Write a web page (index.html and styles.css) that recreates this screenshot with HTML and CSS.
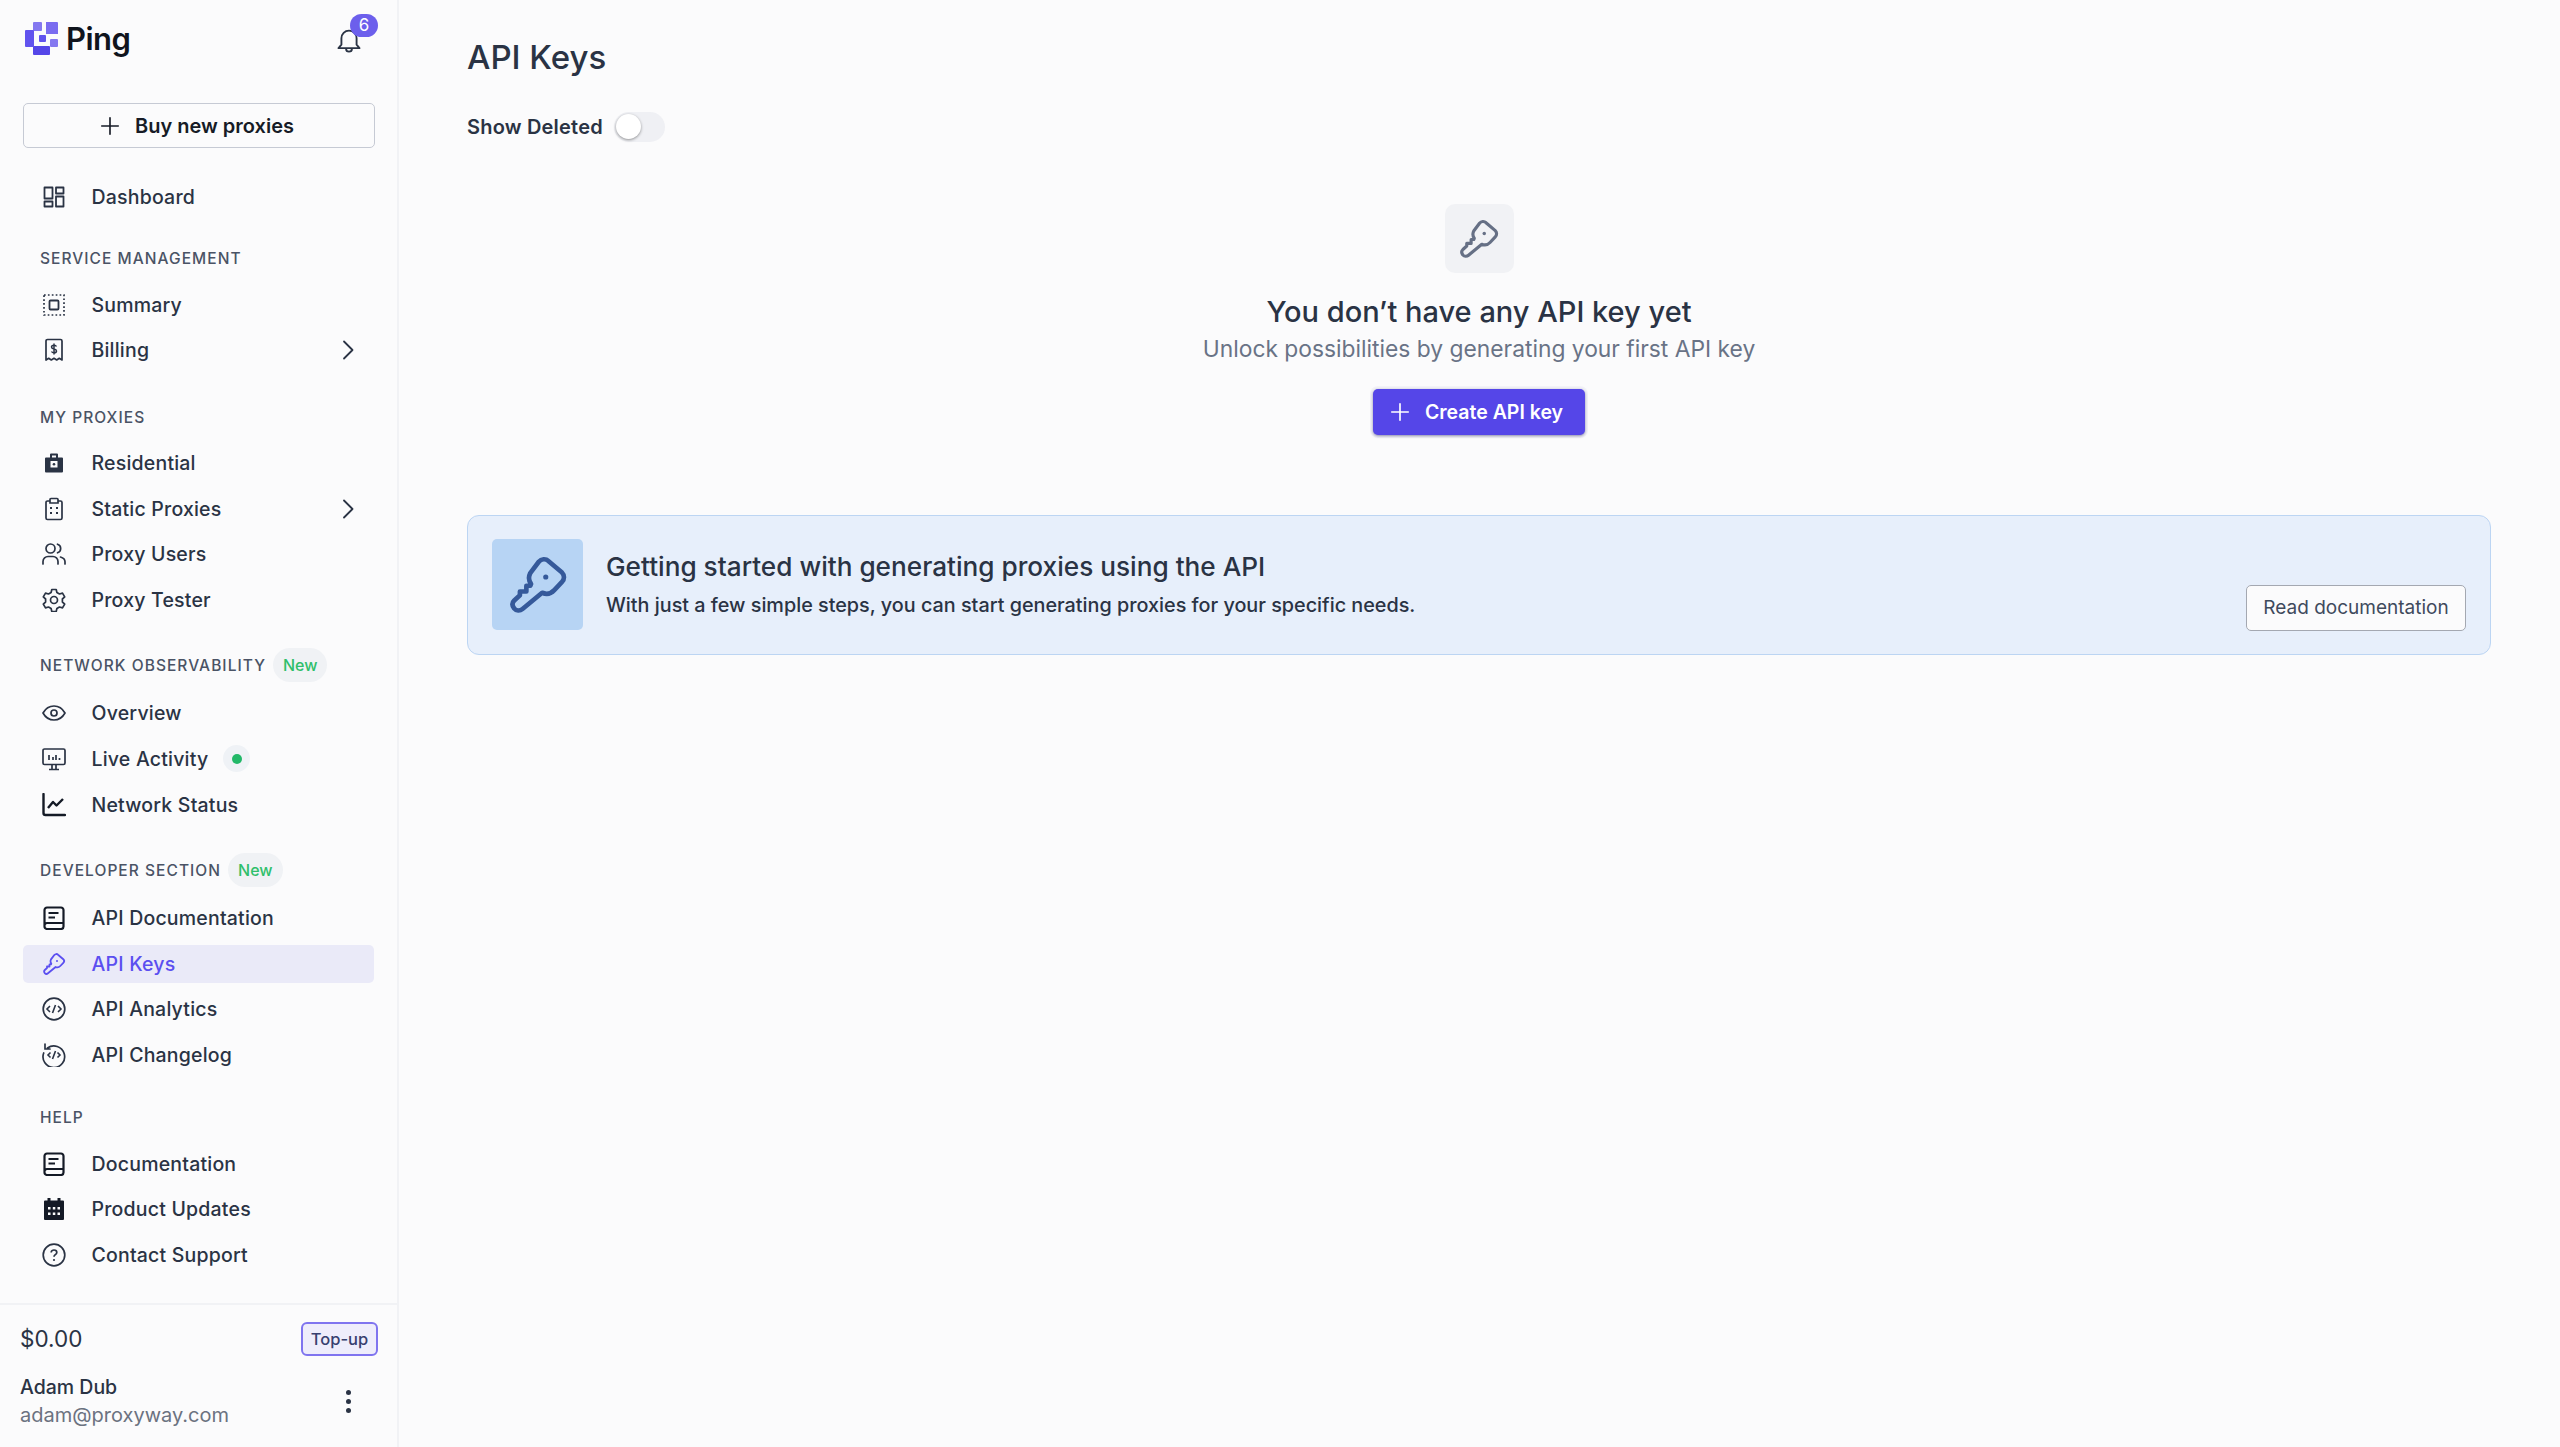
FILE: index.html
```html
<!DOCTYPE html>
<html lang="en">
<head>
  <meta charset="UTF-8">
  <title>API Keys</title>
  <link rel="stylesheet" href="styles.css">
</head>
<body>
  <svg class="defs" width="0" height="0">
    <symbol id="i-key" viewBox="0 0 24 24"><path d="M9.3 11.6C8.5 10.5 8.3 8.8 9 7.4L12.3 3C13.3 1.8 15 1.7 16 2.7L21.3 7.2C22.3 8.2 22.3 9.8 21.3 10.8L18.3 14C17 15.4 15.2 15.7 13.6 15L6 21.3C5 22.1 3.6 22 2.8 21.1C2 20.1 1.9 18.9 2.8 18L5 16V14.5H7.5V12.3H9Z" fill="none" stroke="currentColor" stroke-width="1.8" stroke-linejoin="round"/><circle cx="15" cy="8.9" r="1" fill="currentColor"/></symbol>
    <symbol id="i-plus" viewBox="0 0 24 24"><path d="M12 3v18M3 12h18" fill="none" stroke="currentColor" stroke-width="1.8" stroke-linecap="round"/></symbol>
    <symbol id="i-chev" viewBox="0 0 24 24"><path d="M8 3.500l8.500 8.500-8.500 8.500" fill="none" stroke="currentColor" stroke-width="1.8" stroke-linecap="round" stroke-linejoin="round"/></symbol>
    <symbol id="i-book" viewBox="0 0 24 24"><path d="M2.500 19V4a2.500 2.500 0 0 1 2.500-2.500h14A2.500 2.500 0 0 1 21.500 4v16.500A2.500 2.500 0 0 1 19 23H5a2.500 2.500 0 0 1-2.500-2.500zM2.500 19.500A2.500 2.500 0 0 1 5 17h16.500M6.500 7h10M6.500 11.500h6.500" fill="none" stroke="currentColor" stroke-width="2.200"/></symbol>
  </svg>

  <aside class="sidebar">
    <div class="brand-row">
      <div class="brand">
        <svg class="logo" viewBox="0 0 33 33">
          <rect x="8" y="0" width="9" height="9" rx="1" fill="#8478f0"/>
          <path d="M21 0h11a1 1 0 0 1 1 1v11H21z" fill="#7a6cf0"/>
          <rect x="0" y="8" width="9" height="17" rx="1" fill="#6153ee"/>
          <rect x="14" y="13" width="7" height="7" rx="1" fill="#6153ee"/>
          <rect x="25" y="17" width="8" height="8" rx="1" fill="#8478f0"/>
          <rect x="8" y="24" width="17" height="9" rx="1" fill="#5546e8"/>
        </svg>
        <span class="brand-name">Ping</span>
      </div>
      <div class="bell">
        <svg class="bell-icon" viewBox="0 0 24 24"><path d="M5.500 16V10.500a6.500 6.500 0 0 1 13 0V16l2.500 3H3zM9.500 19.500a2.500 2.500 0 0 0 5 0" fill="none" stroke="#2a3344" stroke-width="1.600" stroke-linejoin="round"/></svg>
        <span class="badge">6</span>
      </div>
    </div>

    <button class="buy-btn"><svg class="plus"><use href="#i-plus"/></svg>Buy new proxies</button>

    <nav class="nav">
      <ul class="nav-group first">
        <li class="item"><svg class="ic" viewBox="0 0 24 24"><path d="M2.500 2.500h8v11h-8zM14 2.500h7.500v6H14zM14 11.500h7.500v10H14zM2.500 16.500h8v5h-8z" fill="none" stroke="currentColor" stroke-width="1.800" stroke-linejoin="round"/></svg>Dashboard</li>
      </ul>

      <div class="label">Service Management</div>
      <ul class="nav-group">
        <li class="item"><svg class="ic" viewBox="0 0 24 24"><path d="M2 2h20v20H2z" fill="none" stroke="currentColor" stroke-width="1.700" stroke-dasharray="1.700 2.200"/><rect x="7.500" y="7.500" width="9" height="9" rx="1" fill="none" stroke="currentColor" stroke-width="1.800"/></svg>Summary</li>
        <li class="item"><svg class="ic" viewBox="0 0 24 24"><path d="M4 3a1.500 1.500 0 0 1 1.500-1.500h13A1.500 1.500 0 0 1 20 3v19l-2.700-1.700-2.600 1.700-2.700-1.700-2.700 1.700-2.600-1.700L4 22z" fill="none" stroke="currentColor" stroke-width="1.700" stroke-linejoin="round"/><path d="M14.500 8.500c-.500-1-1.500-1.300-2.500-1.300-1.400 0-2.500.6-2.500 1.900 0 2.700 5 1.200 5 3.900 0 1.200-1.100 1.800-2.500 1.800-1 0-2-.4-2.500-1.300M12 5.500v11" fill="none" stroke="currentColor" stroke-width="1.500"/></svg>Billing<svg class="chev"><use href="#i-chev"/></svg></li>
      </ul>

      <div class="label wide-gap">My Proxies</div>
      <ul class="nav-group">
        <li class="item"><svg class="ic" viewBox="0 0 24 24"><path d="M8 6.500V3.500a1 1 0 0 1 1-1h6a1 1 0 0 1 1 1v3h4a1 1 0 0 1 1 1v13a1 1 0 0 1-1 1H4a1 1 0 0 1-1-1v-13a1 1 0 0 1 1-1zM10 4.500v2h4v-2zM8.500 10v6.500h7V10z" fill="currentColor" fill-rule="evenodd"/><circle cx="12" cy="13.200" r="1.300" fill="currentColor"/></svg>Residential</li>
        <li class="item"><svg class="ic" viewBox="0 0 24 24"><path d="M8 4H5.500A1.500 1.500 0 0 0 4 5.500V21a1.500 1.500 0 0 0 1.500 1.500h13A1.500 1.500 0 0 0 20 21V5.500A1.500 1.500 0 0 0 18.500 4H16M8 2.500a1 1 0 0 1 1-1h6a1 1 0 0 1 1 1V6H8z" fill="none" stroke="currentColor" stroke-width="1.700"/><path d="M8 11h2M14 11h2M8 16h2M14 16h2" stroke="currentColor" stroke-width="2"/></svg>Static Proxies<svg class="chev"><use href="#i-chev"/></svg></li>
        <li class="item"><svg class="ic" viewBox="0 0 24 24"><circle cx="8.500" cy="6.500" r="4.500" fill="none" stroke="currentColor" stroke-width="1.700"/><path d="M1 22v-2.500C1 16.500 3.500 14.500 6 14.500h5c2.500 0 5 2 5 5V22M15.500 2.200a4.500 4.500 0 0 1 0 8.600M18.500 15c2.500.7 4.500 2.500 4.500 4.800V22" fill="none" stroke="currentColor" stroke-width="1.700" stroke-linecap="round"/></svg>Proxy Users</li>
        <li class="item"><svg class="ic" viewBox="0 0 24 24"><circle cx="12" cy="12" r="3.500" fill="none" stroke="currentColor" stroke-width="1.700"/><path d="M9.800 1.500h4.400l.7 3 2.600 1.500 3-.9 2.200 3.800-2.300 2.100v3l2.300 2.100-2.200 3.800-3-.9-2.600 1.500-.7 3H9.800l-.7-3-2.600-1.500-3 .9-2.200-3.800 2.300-2.100v-3L1.300 8.900l2.200-3.800 3 .9 2.600-1.500z" fill="none" stroke="currentColor" stroke-width="1.700" stroke-linejoin="round"/></svg>Proxy Tester</li>
      </ul>

      <div class="label with-pill">Network Observability<span class="pill">New</span></div>
      <ul class="nav-group">
        <li class="item"><svg class="ic" viewBox="0 0 24 24"><path d="M1 12c2.500-4.500 6.500-7 11-7s8.500 2.500 11 7c-2.500 4.500-6.500 7-11 7S3.500 16.500 1 12z" fill="none" stroke="currentColor" stroke-width="1.700" stroke-linejoin="round"/><circle cx="12" cy="12" r="3" fill="none" stroke="currentColor" stroke-width="1.700"/></svg>Overview</li>
        <li class="item"><svg class="ic" viewBox="0 0 24 24"><rect x="1" y="2" width="22" height="15.500" rx="1.500" fill="none" stroke="currentColor" stroke-width="1.700"/><path d="M7 22.500h10M10 17.500v5M14 17.500v5M7 8v5M11 10v3M14 8v5M17.500 11v2" fill="none" stroke="currentColor" stroke-width="1.700"/></svg>Live Activity<span class="live"><i></i></span></li>
        <li class="item"><svg class="ic" viewBox="0 0 24 24"><path d="M1.500 1v19a2 2 0 0 0 2 2H23" fill="none" stroke="#141a26" stroke-width="2.400" stroke-linecap="round"/><path d="M6 15l5-6 3.500 3.500L21 6" fill="none" stroke="#141a26" stroke-width="2.400" stroke-linejoin="round"/></svg>Network Status</li>
      </ul>

      <div class="label with-pill">Developer Section<span class="pill">New</span></div>
      <ul class="nav-group">
        <li class="item"><svg class="ic dark"><use href="#i-book"/></svg>API Documentation</li>
        <li class="item active"><svg class="ic"><use href="#i-key"/></svg>API Keys</li>
        <li class="item"><svg class="ic" viewBox="0 0 24 24"><circle cx="12" cy="12" r="10.800" fill="none" stroke="currentColor" stroke-width="1.700"/><path d="M8 9l-3 3 3 3M16 9l3 3-3 3M13.500 8l-3 8" fill="none" stroke="currentColor" stroke-width="1.600"/></svg>API Analytics</li>
        <li class="item"><svg class="ic" viewBox="0 0 24 24"><path d="M3 1v5h5M5.500 5a10.800 10.800 0 1 1-3.800 5" fill="none" stroke="currentColor" stroke-width="1.700" stroke-linecap="round"/><path d="M8.500 9.500l-2.500 2.500 2.500 2.500M15.500 9.500l2.500 2.500-2.500 2.500M13.500 8l-3 8" fill="none" stroke="currentColor" stroke-width="1.600"/></svg>API Changelog</li>
      </ul>

      <div class="label help">Help</div>
      <ul class="nav-group">
        <li class="item"><svg class="ic dark"><use href="#i-book"/></svg>Documentation</li>
        <li class="item"><svg class="ic" viewBox="0 0 24 24"><path d="M5.500 1h3v2.500h7V1h3v2.500H21a1 1 0 0 1 1 1V22a1 1 0 0 1-1 1H3a1 1 0 0 1-1-1V4.500a1 1 0 0 1 1-1h2.500z" fill="#141a26"/><path d="M6 10h2.500v2.500H6zM10.800 10h2.500v2.500h-2.500zM15.500 10H18v2.500h-2.500zM6 15.500h2.500V18H6zM10.800 15.500h2.500V18h-2.500zM15.500 15.500H18V18h-2.500z" fill="#fbfbfc"/></svg>Product Updates</li>
        <li class="item"><svg class="ic" viewBox="0 0 24 24"><circle cx="12" cy="12" r="10.800" fill="none" stroke="currentColor" stroke-width="1.700"/><path d="M9.200 9.500c0-1.600 1.300-2.500 2.800-2.500s2.800.9 2.800 2.400c0 2.300-2.800 2.200-2.800 4.300" fill="none" stroke="currentColor" stroke-width="1.700"/><circle cx="12" cy="17" r="1.100" fill="currentColor"/></svg>Contact Support</li>
      </ul>
    </nav>

    <div class="account">
      <div class="balance-row">
        <span class="balance">$0.00</span>
        <button class="topup">Top-up</button>
      </div>
      <div class="user-row">
        <div>
          <div class="user-name">Adam Dub</div>
          <div class="user-mail">adam@proxyway.com</div>
        </div>
        <div class="dots"><i></i><i></i><i></i></div>
      </div>
    </div>
  </aside>

  <main class="main">
    <h1>API Keys</h1>
    <div class="toggle-row">
      <span>Show Deleted</span>
      <span class="toggle"><i></i></span>
    </div>

    <section class="empty">
      <div class="empty-icon"><svg><use href="#i-key"/></svg></div>
      <h2>You don’t have any API key yet</h2>
      <p>Unlock possibilities by generating your first API key</p>
      <button class="create-btn"><svg class="plus"><use href="#i-plus"/></svg>Create API key</button>
    </section>

    <section class="banner">
      <div class="banner-icon"><svg><use href="#i-key"/></svg></div>
      <div class="banner-text">
        <h3>Getting started with generating proxies using the API</h3>
        <p>With just a few simple steps, you can start generating proxies for your specific needs.</p>
      </div>
      <button class="read-btn">Read documentation</button>
    </section>
  </main>
</body>
</html>
```

FILE: styles.css
```css
* {
  box-sizing: border-box;
}
body {
  margin: 0;
  height: 1447px;
  display: flex;
  overflow: hidden;
  font-family: 'Inter', 'Liberation Sans', sans-serif;
  background: #fbfbfc;
  color: #2a3344;
}
.defs {
  position: absolute;
}
button {
  font-family: inherit;
  cursor: pointer;
}

/* sidebar */
.sidebar {
  width: 399px;
  flex: none;
  display: flex;
  flex-direction: column;
  border-right: 2px solid #f1f2f5;
}
.brand-row {
  height: 80px;
  padding: 0 21px 0 25px;
  display: flex;
  justify-content: space-between;
  align-items: center;
}
.brand {
  display: flex;
  align-items: center;
  gap: 8px;
  margin-top: -3px;
}
.logo {
  width: 33px;
  height: 33px;
}
.brand-name {
  font-size: 31px;
  font-weight: 600;
  color: #10141d;
  letter-spacing: -0.5px;
}
.bell {
  position: relative;
  width: 28px;
  height: 28px;
  margin-right: 13px;
}
.bell-icon {
  width: 28px;
  height: 28px;
  display: block;
}
.badge {
  position: absolute;
  top: -12px;
  left: 15px;
  width: 28px;
  height: 23px;
  border-radius: 12px;
  background: #6c5fec;
  color: #fff;
  font-size: 17px;
  line-height: 23px;
  text-align: center;
}
.buy-btn {
  margin: 23px 23px 0;
  width: 352px;
  height: 45px;
  flex: none;
  display: flex;
  justify-content: center;
  align-items: center;
  gap: 14px;
  padding: 0 5px 0 0;
  background: transparent;
  border: 1px solid #c6cad4;
  border-radius: 5px;
  font-size: 20px;
  font-weight: 600;
  color: #161b26;
}
.plus {
  width: 22px;
  height: 22px;
  flex: none;
}
.nav {
  flex: 1;
  padding: 0 23px;
}
.nav-group {
  list-style: none;
  margin: 0;
  padding: 0;
  display: flex;
  flex-direction: column;
  gap: 7.6px;
}
.nav-group.first {
  margin-top: 30px;
}
.label {
  height: 24px;
  margin: 30.500px 0 15px 17px;
  display: flex;
  align-items: center;
  font-size: 15.500px;
  font-weight: 500;
  letter-spacing: 1.05px;
  text-transform: uppercase;
  color: #4a5365;
}
.label.wide-gap {
  margin-top: 36px;
}
.label.help {
  margin-top: 32px;
}
.label.with-pill {
  height: 34px;
  margin-top: 29.500px;
  margin-bottom: 12px;
}
.pill {
  margin-left: 7px;
  padding: 0 10px;
  height: 34px;
  border-radius: 17px;
  background: #f0f2f5;
  color: #2fbf6b;
  font-size: 16px;
  line-height: 34px;
  letter-spacing: 0;
  text-transform: none;
}
.item {
  height: 38px;
  padding: 0 14px 0 19px;
  display: flex;
  align-items: center;
  border-radius: 5px;
  font-size: 19.500px;
  letter-spacing: 0.2px;
  font-weight: 500;
  color: #2a3344;
}
.item.active {
  background: #eaeaf8;
  color: #5b4ff0;
}
.ic {
  width: 24px;
  height: 24px;
  flex: none;
  margin-right: 25.500px;
  color: #2a3344;
}
.ic.dark {
  color: #141a26;
}
.active .ic {
  color: #5b4ff0;
}
.chev {
  width: 24px;
  height: 24px;
  margin-left: auto;
  color: #2a3344;
}
.live {
  width: 27px;
  height: 27px;
  margin-left: 15px;
  border-radius: 50%;
  background: #eff2f6;
  display: flex;
  align-items: center;
  justify-content: center;
}
.live i {
  width: 10px;
  height: 10px;
  border-radius: 50%;
  background: #22b868;
}

/* account box */
.account {
  flex: none;
  height: 144px;
  border-top: 2px solid #f1f2f5;
  padding: 17px 19px 0 20px;
}
.balance-row {
  display: flex;
  justify-content: space-between;
  align-items: center;
  height: 34px;
}
.balance {
  font-size: 22.500px;
  color: #2a3344;
  margin-top: -2px;
}
.topup {
  width: 77px;
  height: 34px;
  border: 2px solid #7f74ef;
  border-radius: 6px;
  background: #eeedfb;
  color: #37406f;
  font-size: 16.500px;
  font-weight: 500;
  padding: 0;
}
.user-row {
  margin-top: 17px;
  display: flex;
  justify-content: space-between;
  align-items: center;
}
.user-name {
  font-size: 19.500px;
  font-weight: 500;
  line-height: 28px;
}
.user-mail {
  font-size: 20px;
  line-height: 28px;
  color: #6b7280;
}
.dots {
  display: flex;
  flex-direction: column;
  gap: 4px;
  margin-right: 27px;
}
.dots i {
  width: 5px;
  height: 5px;
  border-radius: 50%;
  background: #2a3344;
}

/* main column */
.main {
  flex: 1;
  padding: 0 69px 0 68px;
}
h1 {
  margin: 33px 0 0;
  font-size: 33px;
  line-height: 48px;
  font-weight: 500;
}
.toggle-row {
  margin-top: 31px;
  display: flex;
  align-items: center;
  gap: 11px;
  height: 30px;
  font-size: 20px;
  letter-spacing: 0.2px;
  font-weight: 600;
}
.toggle {
  width: 51px;
  height: 30px;
  border-radius: 15px;
  background: #eff0f4;
  padding: 2px;
}
.toggle i {
  display: block;
  width: 25px;
  height: 25px;
  border-radius: 50%;
  background: #fff;
  box-shadow: 0 1px 3px rgba(0, 0, 0, 0.4);
}
.empty {
  margin-top: 62px;
  display: flex;
  flex-direction: column;
  align-items: center;
}
.empty-icon {
  width: 69px;
  height: 69px;
  border-radius: 10px;
  background: #f1f2f5;
  display: flex;
  align-items: center;
  justify-content: center;
  color: #667085;
}
.empty-icon svg {
  width: 42px;
  height: 42px;
}
.empty h2 {
  margin: 18.500px 0 0;
  font-size: 29px;
  line-height: 40px;
  font-weight: 500;
}
.empty p {
  margin: 0;
  font-size: 22.800px;
  line-height: 34px;
  color: #697386;
}
.create-btn {
  margin-top: 23px;
  width: 212px;
  height: 46px;
  display: flex;
  align-items: center;
  justify-content: center;
  gap: 14px;
  padding: 0 6px 0 0;
  border: none;
  border-radius: 5px;
  background: #5546e8;
  color: #fff;
  font-size: 19.500px;
  font-weight: 600;
  box-shadow: 0 1px 3px rgba(30, 30, 90, 0.5), 0 0 0 3px #f3f3f8;
}
.banner {
  margin-top: 80px;
  height: 140px;
  padding: 0 24px;
  display: flex;
  align-items: center;
  background: #e7effb;
  border: 1px solid #bcd5f3;
  border-radius: 12px;
}
.banner-icon {
  width: 91px;
  height: 91px;
  flex: none;
  border-radius: 5px;
  background: #b7d4f4;
  display: flex;
  align-items: center;
  justify-content: center;
  color: #35599a;
}
.banner-icon svg {
  width: 62px;
  height: 62px;
}
.banner-text {
  margin-left: 23px;
  flex: 1;
}
.banner h3 {
  margin: 0;
  font-size: 26.200px;
  line-height: 36px;
  font-weight: 500;
}
.banner p {
  margin: 5px 0 0;
  font-size: 19.800px;
  line-height: 30px;
  font-weight: 500;
}
.read-btn {
  align-self: flex-end;
  margin-bottom: 23px;
  width: 220px;
  height: 46px;
  padding: 0;
  background: #fbfbfc;
  border: 1.500px solid #a4a8b1;
  border-radius: 5px;
  color: #3f4a5c;
  font-size: 19px;
}
```
